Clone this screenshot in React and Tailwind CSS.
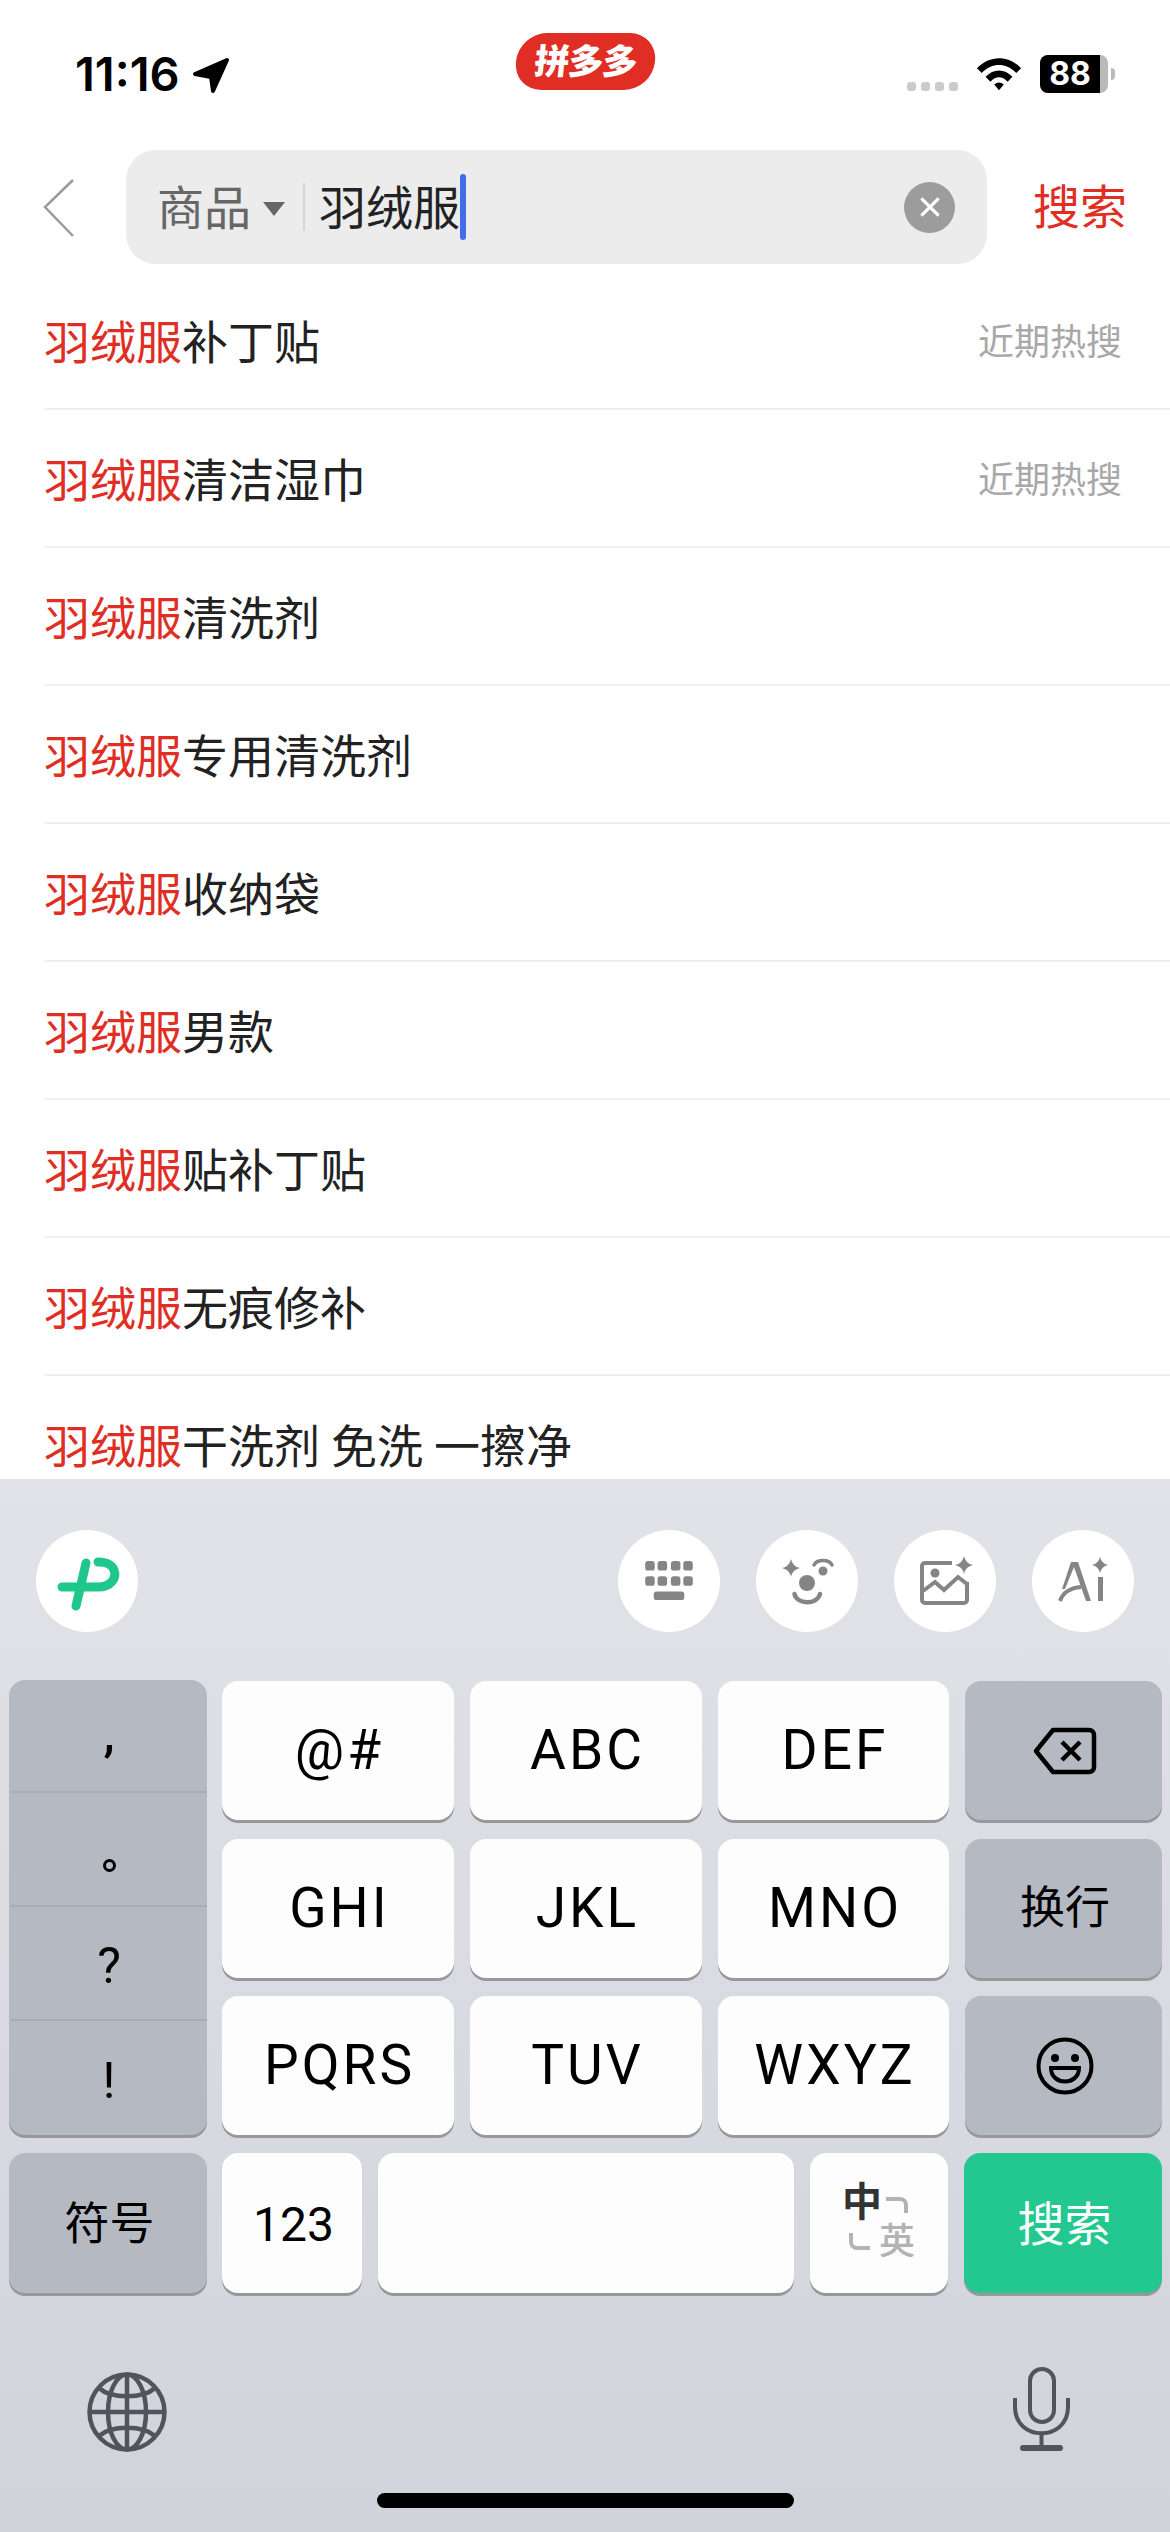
/**
 * Pinduoduo search suggestions with the iOS nine-key keyboard
 */

import React from "react";

const FONT_CN = "font-['Inter','Noto_Sans_CJK_SC',sans-serif]";

const suggestions = [
  { rest: "补丁贴", hot: true },
  { rest: "清洁湿巾", hot: true },
  { rest: "清洗剂" },
  { rest: "专用清洗剂" },
  { rest: "收纳袋" },
  { rest: "男款" },
  { rest: "贴补丁贴" },
  { rest: "无痕修补" },
  { rest: "干洗剂 免洗 一擦净" },
];

const StatusBar = () => (
  <div className="h-[150px] shrink-0 grid grid-cols-3 bg-white">
    <div className="flex items-start pl-[75px] pt-[48px]">
      <span className="text-[47px] leading-[52px] font-semibold text-black font-['Inter',sans-serif]">
        11:16
      </span>
      <svg width="38" height="37" viewBox="0 0 38 37" className="ml-[12px] mt-[9px]">
        <path d="M35 3 L3 17 L19 20 L21 34 Z" fill="#000" stroke="#000" strokeWidth="4" strokeLinejoin="round" />
      </svg>
    </div>
    <div className="flex justify-center pt-[33px]">
      <div className="w-[139px] h-[57px] rounded-[28px] bg-[#e02e24] flex items-center justify-center text-white text-[35px] leading-none font-black tracking-[-1px] -skew-x-6">
        拼多多
      </div>
    </div>
    <div className="flex items-start justify-end pr-[55px]">
      <div className="flex gap-[5px] mt-[82px]">
        <span className="w-[9px] h-[9px] rounded-[3px] bg-[#cbcbcb]" />
        <span className="w-[9px] h-[9px] rounded-[3px] bg-[#cbcbcb]" />
        <span className="w-[9px] h-[9px] rounded-[3px] bg-[#cbcbcb]" />
        <span className="w-[9px] h-[9px] rounded-[3px] bg-[#cbcbcb]" />
      </div>
      <svg width="48" height="37" viewBox="0 0 50 37" className="ml-[17px] mt-[55px]">
        <path d="M2 13 C15 -1 35 -1 48 13 L43 18 C32 7 18 7 7 18 Z" fill="#000" />
        <path d="M11 22 C19 13 31 13 39 22 L34 27 C28 21 22 21 16 27 Z" fill="#000" />
        <path d="M20 30 C23 27 27 27 30 30 L25 36 Z" fill="#000" />
      </svg>
      <div className="ml-[17px] mt-[55px] w-[68px] h-[38px] rounded-[8px] bg-[#b9b9b9] overflow-hidden">
        <div className="w-[60px] h-full bg-black flex items-center justify-center text-white text-[32px] leading-none font-bold font-['Inter',sans-serif]">
          88
        </div>
      </div>
      <div className="mt-[68px] ml-[3px] w-[4px] h-[12px] rounded-r-full bg-[#b9b9b9]" />
    </div>
  </div>
);

const SearchBar = () => (
  <div className="h-[122px] shrink-0 flex items-start bg-white">
    <svg width="34" height="60" viewBox="0 0 34 60" className="ml-[42px] mt-[28px] shrink-0">
      <path d="M31 2 L3 29 L31 58" fill="none" stroke="#9b9b9b" strokeWidth="2.5" />
    </svg>
    <div className="ml-[50px] w-[861px] h-[114px] rounded-[30px] bg-[#ececec] flex items-center pl-[31px] pr-[32px]">
      <span className="text-[47px] text-[#666] leading-none">商品</span>
      <span className="ml-[12px] mt-[4px] w-0 h-0 border-x-[11px] border-x-transparent border-t-[14px] border-t-[#666]" />
      <span className="ml-[18px] w-[2px] h-[48px] bg-[#d4d4d4]" />
      <span className="ml-[14px] text-[47px] text-[#222] leading-none">羽绒服</span>
      <span className="w-[6px] h-[66px] rounded-full bg-[#3f6ee8]" />
      <span className="ml-auto w-[51px] h-[51px] rounded-full bg-[#9c9c9c] flex items-center justify-center">
        <svg width="26" height="26" viewBox="0 0 24 24">
          <path d="M4 4 L20 20 M20 4 L4 20" stroke="#fff" strokeWidth="3" />
        </svg>
      </span>
    </div>
    <span className="ml-[46px] mt-[33px] text-[47px] leading-[48px] text-[#e02e24]">搜索</span>
  </div>
);

const SuggestionRow = ({ rest, hot }) => (
  <div className="ml-[44px] h-[138px] shrink-0 flex items-center pr-[48px] pt-[3px] border-b-2 border-[#f0f0f0]">
    <span className="text-[46px] leading-none text-[#222] whitespace-pre [word-spacing:-2px]">
      <span className="text-[#e02e24]">羽绒服</span>
      {rest}
    </span>
    {hot && <span className="ml-auto text-[36px] leading-none text-[#a8a8a8]">近期热搜</span>}
  </div>
);

const ToolButton = ({ children, className = "" }) => (
  <div className={`w-[102px] h-[102px] rounded-full bg-white flex items-center justify-center ${className}`}>
    {children}
  </div>
);

const Sparkle = ({ x, y, r }) => (
  <path
    d={`M${x} ${y - r} Q${x + 1.5} ${y - 1.5} ${x + r} ${y} Q${x + 1.5} ${y + 1.5} ${x} ${y + r} Q${x - 1.5} ${y + 1.5} ${x - r} ${y} Q${x - 1.5} ${y - 1.5} ${x} ${y - r} Z`}
    fill="#858585"
  />
);

const Toolbar = () => (
  <div className="h-[201px] shrink-0 flex items-start pt-[51px] pl-[36px] pr-[36px]">
    <ToolButton className="mr-auto">
      <svg width="102" height="102" viewBox="0 0 102 102" fill="none" stroke="#20c78b" strokeWidth="9" strokeLinecap="round">
        <path d="M50 33 L40 76" />
        <path d="M26 57 H62 C75 57 81 48 78 40 C75 33 69 32 62 32" />
      </svg>
    </ToolButton>
    <div className="flex gap-[36px]">
      <ToolButton>
        <svg width="48" height="40" viewBox="0 0 50 42" fill="#858585">
          <rect x="0" y="0" width="10" height="10" rx="3" />
          <rect x="13" y="0" width="10" height="10" rx="3" />
          <rect x="27" y="0" width="10" height="10" rx="3" />
          <rect x="40" y="0" width="10" height="10" rx="3" />
          <rect x="0" y="16" width="10" height="10" rx="3" />
          <rect x="13" y="16" width="10" height="10" rx="3" />
          <rect x="27" y="16" width="10" height="10" rx="3" />
          <rect x="40" y="16" width="10" height="10" rx="3" />
          <rect x="9" y="32" width="32" height="9" rx="3" />
        </svg>
      </ToolButton>
      <ToolButton>
        <svg width="60" height="60" viewBox="0 0 60 60" fill="none">
          <Sparkle x={14} y={17} r={9} />
          <path d="M37 14 C40 8 52 8 55 14" stroke="#858585" strokeWidth="3.5" strokeLinecap="round" />
          <circle cx="46" cy="20" r="4.5" fill="#858585" />
          <circle cx="30" cy="32" r="8" fill="#858585" />
          <path d="M17.5 43 C20 54 40 54 43 43" stroke="#858585" strokeWidth="4.5" strokeLinecap="round" />
        </svg>
      </ToolButton>
      <ToolButton>
        <svg width="60" height="60" viewBox="0 0 60 60" fill="none">
          <path d="M37 12 H10 a3 3 0 0 0 -3 3 V49 a3 3 0 0 0 3 3 H49 a3 3 0 0 0 3 -3 V31" stroke="#858585" strokeWidth="4" />
          <circle cx="20" cy="22" r="4.5" fill="#858585" />
          <path d="M8 40 L20 31 L29 39 L43 26 L52 33" stroke="#858585" strokeWidth="4" />
          <Sparkle x={49} y={14} r={9} />
        </svg>
      </ToolButton>
      <ToolButton>
        <svg width="60" height="60" viewBox="0 0 60 60" fill="none">
          <path d="M18 11 H25 L38 50 H33 L21 16 L12 38 H9 Z" fill="#858585" />
          <path d="M7 50 C10 41 17 37 28 36" stroke="#858585" strokeWidth="4" />
          <rect x="45" y="26" width="5" height="24" fill="#858585" />
          <Sparkle x={47} y={14} r={8} />
        </svg>
      </ToolButton>
    </div>
  </div>
);

const Key = ({ children, width = "w-full", height = "h-[139px]", tone = "bg-[#fdfdfe]", className = "" }) => (
  <div
    className={`${width} ${height} ${tone} ${className} shrink-0 rounded-[16px] shadow-[0_3px_0_#97989c] flex items-center justify-center pl-[3px] text-black text-[55px] leading-none tracking-[3px] font-['Roboto','Noto_Sans_CJK_SC',sans-serif]`}
  >
    {children}
  </div>
);

const GRAY = "bg-[#b4b9c2]";

const Keyboard = () => (
  <div className={`flex-1 bg-gradient-to-b from-[#e1e3e8] to-[#d0d3da] ${FONT_CN}`}>
    <Toolbar />
    <div className="pl-[9px] pr-[8px] flex flex-col gap-[18px]">
      <div className="flex gap-[15px] items-start">
        {/* punctuation column */}
        <div className={`w-[198px] h-[455px] shrink-0 rounded-[16px] ${GRAY} shadow-[0_3px_0_#97989c] flex flex-col text-black text-[50px] leading-none pl-[2px] font-['Roboto','Noto_Sans_CJK_SC',sans-serif]`}>
          <div className="h-[113px] flex items-center justify-center border-b-2 border-[#a7acb5] font-medium pb-[3px]">,</div>
          <div className="h-[114px] flex items-center justify-center border-b-2 border-[#a7acb5]">
            <span className="w-[13px] h-[13px] rounded-full border-[3px] border-black mt-[32px]" />
          </div>
          <div className="h-[114px] flex items-center justify-center border-b-2 border-[#a7acb5] pt-[6px]">?</div>
          <div className="h-[114px] flex items-center justify-center pt-[6px]">!</div>
        </div>
        <div className="mt-[1px] grid grid-cols-[232px_232px_231px_197px] gap-x-[16px] gap-y-[18.5px]">
          <Key>@#</Key>
          <Key>ABC</Key>
          <Key>DEF</Key>
          <Key tone={GRAY}>
            <svg width="64" height="48" viewBox="0 0 64 48" fill="none">
              <path d="M20 3 H56 a5 5 0 0 1 5 5 V40 a5 5 0 0 1 -5 5 H20 L3 24 Z" stroke="#000" strokeWidth="4.5" strokeLinejoin="round" />
              <path d="M29 15 L47 33 M47 15 L29 33" stroke="#000" strokeWidth="4.5" />
            </svg>
          </Key>
          <Key>GHI</Key>
          <Key>JKL</Key>
          <Key>MNO</Key>
          <Key tone={GRAY} className="!text-[45px] !tracking-normal">换行</Key>
          <Key>PQRS</Key>
          <Key>TUV</Key>
          <Key>WXYZ</Key>
          <Key tone={GRAY}>
            <svg width="58" height="58" viewBox="0 0 58 58" fill="none">
              <circle cx="29" cy="29" r="26.5" stroke="#000" strokeWidth="4" />
              <circle cx="19" cy="21" r="4" fill="#000" />
              <circle cx="39" cy="21" r="4" fill="#000" />
              <path d="M15 31 H43 C43 49 15 49 15 31 Z" stroke="#000" strokeWidth="4" />
            </svg>
          </Key>
        </div>
      </div>
      <div className="flex gap-[16px]">
        <Key width="w-[198px]" height="h-[140px]" tone={GRAY} className="!text-[45px] !tracking-normal -mr-[1px] pt-[3px]">符号</Key>
        <Key width="w-[140px]" height="h-[140px]" className="!text-[48px] !tracking-normal pt-[3px]">123</Key>
        <Key width="w-[416px]" height="h-[140px]" />
        <Key width="w-[138px]" height="h-[140px]" className="relative">
          <span className="absolute left-[32px] top-[30px] text-[40px] leading-none font-bold text-[#333] tracking-normal">中</span>
          <span className="absolute right-[33px] bottom-[33px] text-[36px] leading-none font-medium text-[#b3b3b3] tracking-normal">英</span>
          <svg width="138" height="140" viewBox="0 0 138 140" fill="none" className="absolute left-0 top-0">
            <path d="M76 46 H90 a6 6 0 0 1 6 6 V60" stroke="#b3b3b3" strokeWidth="4" />
            <path d="M41 80 V89 a6 6 0 0 0 6 6 H60" stroke="#b3b3b3" strokeWidth="4" />
          </svg>
        </Key>
        <Key width="w-[198px]" height="h-[140px]" tone="bg-[#22c88f]" className="!text-white !text-[47px] !tracking-normal pt-[3px]">搜索</Key>
      </div>
    </div>
    <div className="flex justify-between items-start pl-[87px] pr-[100px] mt-[79px]">
      <svg width="80" height="80" viewBox="0 0 80 80" fill="none" stroke="#50555c" strokeWidth="4.5">
        <circle cx="40" cy="40" r="37.5" />
        <ellipse cx="40" cy="40" rx="19" ry="37.5" />
        <path d="M40 2 V78 M2 40 H78" />
        <path d="M12 16 C24 27 56 27 68 16 M12 64 C24 53 56 53 68 64" />
      </svg>
      <svg width="57" height="84" viewBox="0 0 57 84" fill="none" stroke="#50555c" strokeWidth="4" className="-mt-[5px]">
        <rect x="17" y="2" width="24" height="53" rx="12" />
        <path d="M2 31 V40 C2 75 55 75 55 40 V31" />
        <path d="M28.5 68 V80" />
        <path d="M10 81 H47" strokeWidth="6" strokeLinecap="round" />
      </svg>
    </div>
    <div className="flex justify-center mt-[41px]">
      <div className="w-[417px] h-[15px] rounded-full bg-black" />
    </div>
  </div>
);

const App = () => {
  return (
    <div className={`w-[1170px] h-[2532px] flex flex-col overflow-hidden bg-white ${FONT_CN}`}>
      <StatusBar />
      <SearchBar />
      <div className="h-[1207px] shrink-0 flex flex-col overflow-hidden bg-white">
        {suggestions.map((item) => (
          <SuggestionRow key={item.rest} rest={item.rest} hot={item.hot} />
        ))}
      </div>
      <Keyboard />
    </div>
  );
};

export default App;
